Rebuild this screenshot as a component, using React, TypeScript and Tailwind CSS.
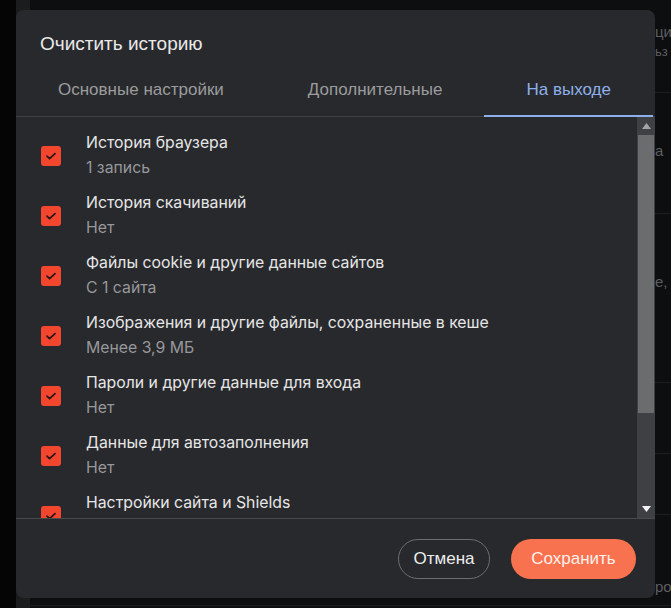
import React from 'react';

const items = [
  { title: 'История браузера', sub: '1 запись' },
  { title: 'История скачиваний', sub: 'Нет' },
  { title: 'Файлы cookie и другие данные сайтов', sub: 'С 1 сайта' },
  { title: 'Изображения и другие файлы, сохраненные в кеше', sub: 'Менее 3,9 МБ' },
  { title: 'Пароли и другие данные для входа', sub: 'Нет' },
  { title: 'Данные для автозаполнения', sub: 'Нет' },
  { title: 'Настройки сайта и Shields', sub: 'Нет' },
];

const tabs = ['Основные настройки', 'Дополнительные', 'На выходе'];

function Checkbox() {
  return (
    <div className="w-5 h-5 shrink-0 rounded-[3px] bg-[#f2462f] flex items-center justify-center">
      <svg width="14" height="14" viewBox="0 0 14 14" fill="none">
        <path d="M3 7.2l2.6 2.5L11 4.6" stroke="#2a1512" strokeWidth="1.7" strokeLinecap="round" strokeLinejoin="round" />
      </svg>
    </div>
  );
}

export default function App() {
  return (
    <div className="relative h-[608px] w-[671px] overflow-hidden bg-[#0d0e10] font-['Liberation_Sans',sans-serif]">
      {/* page behind the dialog */}
      <div className="flex h-full">
        <div className="w-4 bg-[#050506]" />
        <div className="w-[14px] bg-[#1b1c1e]" />
        <div className="flex-1 flex flex-col text-[15px] text-[#5d5e61] items-end">
          <div className="h-[22px]" />
          <div className="w-[16px] leading-[20px]">ци</div>
          <div className="w-[16px] leading-[20px] text-[13px]">ьз</div>
          <div className="w-full h-px bg-[#1d1e21] mt-[30px]" />
          <div className="w-[16px] leading-[20px] mt-[48px]">а</div>
          <div className="w-full h-px bg-[#1d1e21] mt-[52px]" />
          <div className="w-[16px] leading-[20px] mt-[58px]">е,</div>
          <div className="w-full h-px bg-[#1d1e21] mt-[90px]" />
          <div className="w-full h-px bg-[#1d1e21] mt-[70px]" />
          <div className="w-full h-px bg-[#1d1e21] mt-[60px]" />
          <div className="w-[16px] leading-[20px] mt-[62px]">ро</div>
          <div className="w-full h-px bg-[#1d1e21] mt-[8px]" />
        </div>
      </div>

      {/* dialog */}
      <div className="absolute left-4 top-[10px] w-[639px] h-[588px] rounded-lg bg-[#28292c] flex flex-col overflow-hidden">
        <div className="pl-6 pt-[22px] text-[19px] leading-[24px] text-[#e9e9ea]">Очистить историю</div>

        <div className="flex mt-[11px] border-b border-[#3e3f42]">
          {tabs.map((t, i) => (
            <div
              key={t}
              className={
                i === 2
                  ? 'pl-[42px] pr-[42px] pt-[12px] pb-[14px] text-[17px] leading-[22px] text-[#8eb0ea] border-b-2 border-[#8eb0ea] -mb-px'
                  : 'px-[42px] pt-[12px] pb-[15px] text-[17px] leading-[22px] text-[#9b9c9e]'
              }
            >
              {t}
            </div>
          ))}
        </div>

        <div className="flex h-[402px] border-b border-[#4a4b4e]">
          <div className="flex-1 overflow-hidden pt-[15px] pl-[25px] font-['Inter',sans-serif]">
            {items.map((it) => (
              <div key={it.title} className="h-[60px] flex items-start gap-[25px]">
                <div className="h-[47px] flex items-center">
                  <Checkbox />
                </div>
                <div className="flex flex-col">
                  <div className="text-[15.8px] leading-[22px] text-[#e6e6e7]">{it.title}</div>
                  <div className="mt-[3px] text-[15.8px] leading-[22px] text-[#97989b]">{it.sub}</div>
                </div>
              </div>
            ))}
          </div>
          <div className="w-[18px] flex flex-col bg-[#3f4043]">
            <div className="h-[18px] flex items-center justify-center">
              <svg width="9" height="6" viewBox="0 0 9 6"><path d="M4.5 0L9 6H0z" fill="#a3a4a6" /></svg>
            </div>
            <div className="mx-[1px] h-[278px] bg-[#6b6c6e]" />
            <div className="flex-1" />
            <div className="h-[18px] flex items-center justify-center">
              <svg width="9" height="6" viewBox="0 0 9 6"><path d="M0 0h9L4.5 6z" fill="#f2f2f2" /></svg>
            </div>
          </div>
        </div>

        <div className="flex justify-end gap-[21px] pt-[20px] pr-[19px]">
          <button className="h-10 w-[92px] rounded-full border border-[#6d6e71] text-[17px] text-[#ededee]">
            Отмена
          </button>
          <button className="h-10 w-[125px] rounded-full bg-[#f8724f] text-[17px] text-[#fff0ea]">
            Сохранить
          </button>
        </div>
      </div>
    </div>
  );
}
